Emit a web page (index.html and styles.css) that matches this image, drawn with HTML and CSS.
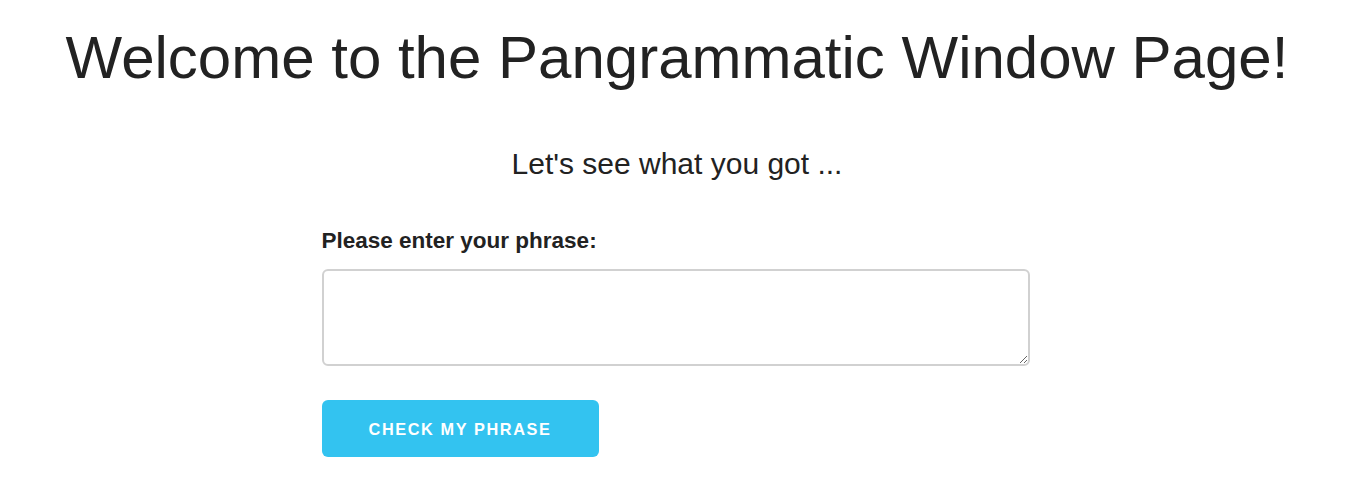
FILE: index.html
```html
<!DOCTYPE html>
<html>
<head>
<meta charset="utf-8">
<link rel="stylesheet" href="styles.css">
</head>
<body>
<main class="page">
  <h1 class="title">Welcome to the Pangrammatic Window Page!</h1>
  <p class="subtitle">Let's see what you got ...</p>
  <form class="form">
    <label class="label" for="phrase">Please enter your phrase:</label>
    <textarea id="phrase" class="input"></textarea>
    <button type="button" class="btn">Check my phrase</button>
  </form>
</main>
</body>
</html>
```
FILE: styles.css
```css
html, body {
  margin: 0;
  padding: 0;
  background: #fff;
}
body {
  font-family: "Liberation Sans", Arial, sans-serif;
  color: #222;
}
.page {
  display: flex;
  flex-direction: column;
  align-items: center;
  padding-top: 21px;
  padding-right: 2px;
}
.title {
  margin: 0;
  font-size: 60px;
  font-weight: 400;
  line-height: 74px;
}
.subtitle {
  margin: 49px 0 0;
  font-size: 30px;
  line-height: 40px;
}
.form {
  width: 708px;
  margin-top: 42px;
  margin-right: 3px;
  display: flex;
  flex-direction: column;
  align-items: flex-start;
}
.label {
  font-size: 22.5px;
  font-weight: 700;
  line-height: 30px;
}
.input {
  box-sizing: border-box;
  width: 708px;
  height: 97px;
  margin-top: 13px;
  border: 2px solid #d1d1d1;
  border-radius: 6px;
  resize: vertical;
  font: inherit;
}
.btn {
  margin-top: 34px;
  width: 277px;
  height: 57px;
  padding-top: 2px;
  border: none;
  border-radius: 6px;
  background: #33c3f0;
  color: #fff;
  font-family: "Liberation Sans", Arial, sans-serif;
  font-size: 16.3px;
  font-weight: 700;
  letter-spacing: 1.6px;
  text-transform: uppercase;
}
```
